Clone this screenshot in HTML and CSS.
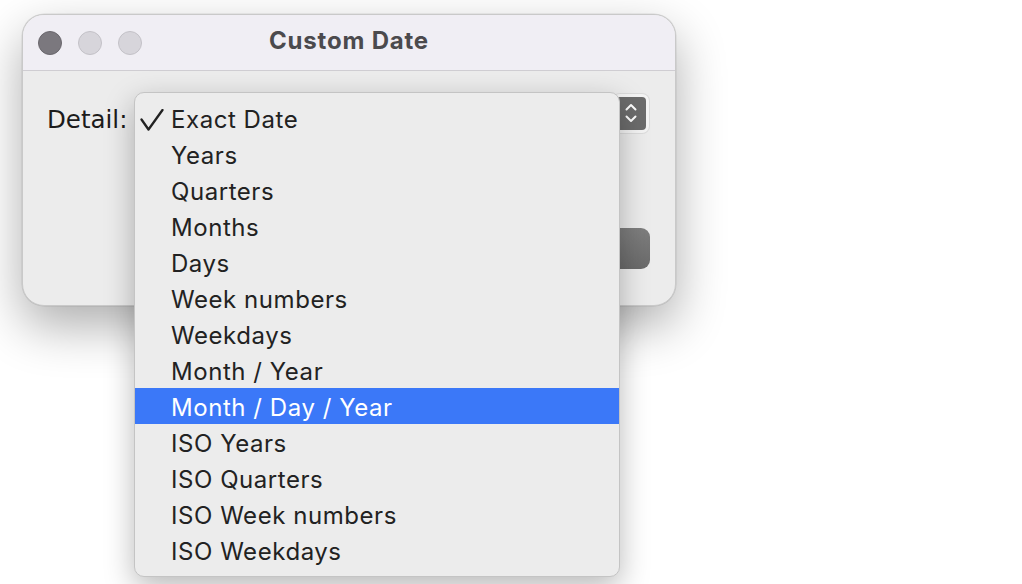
FILE: index.html
```html
<!DOCTYPE html>
<html>
<head>
<meta charset="utf-8">
<link rel="stylesheet" href="styles.css">
</head>
<body>
<div class="window">
  <div class="titlebar">
    <div class="lights">
      <span class="light close"></span>
      <span class="light"></span>
      <span class="light"></span>
    </div>
    <div class="title">Custom Date</div>
    <div class="spacer"></div>
  </div>
  <div class="content">
    <div class="row">
      <span class="label">Detail:</span>
      <span class="popup">
        <svg class="chev" viewBox="0 0 14 26" width="14" height="26"><path d="M2.5 9.5 L7 5 L11.5 9.5 M2.5 16.5 L7 21 L11.5 16.5" fill="none" stroke="#fff" stroke-width="2" stroke-linecap="round" stroke-linejoin="round"/></svg>
      </span>
    </div>
    <div class="btnrow">
      <span class="button"></span>
    </div>
  </div>
</div>
<div class="menu">
  <div class="item"><svg class="check" viewBox="0 0 24 22" width="24" height="22"><path d="M1.5 10.5 L8.5 20.5 L22.5 1" fill="none" stroke="#222" stroke-width="2.3" stroke-linecap="round" stroke-linejoin="round"/></svg>Exact Date</div>
  <div class="item">Years</div>
  <div class="item">Quarters</div>
  <div class="item">Months</div>
  <div class="item">Days</div>
  <div class="item">Week numbers</div>
  <div class="item">Weekdays</div>
  <div class="item">Month / Year</div>
  <div class="item selected">Month / Day / Year</div>
  <div class="item">ISO Years</div>
  <div class="item">ISO Quarters</div>
  <div class="item">ISO Week numbers</div>
  <div class="item">ISO Weekdays</div>
</div>
</body>
</html>
```
FILE: styles.css
```css
html, body {
  margin: 0;
  padding: 0;
  background: #ffffff;
  width: 1022px;
  height: 584px;
  overflow: hidden;
  position: relative;
}
.window {
  margin: 14px 0 0 22px;
  width: 652px;
  height: 290px;
  background: #ececec;
  border: 1px solid #c9c9c9;
  border-radius: 22px;
  box-shadow: 0 20px 50px rgba(0,0,0,0.32), 0 0 0 0.5px rgba(0,0,0,0.1);
  overflow: hidden;
  box-sizing: content-box;
}
.titlebar {
  height: 55px;
  background: #f0eef4;
  border-bottom: 1px solid #cfcdd2;
  display: grid;
  grid-template-columns: 1fr auto 1fr;
  align-items: center;
}
.lights {
  display: flex;
  gap: 16px;
  padding-left: 15px;
}
.light {
  width: 22px;
  height: 22px;
  border-radius: 50%;
  background: #d7d5db;
  border: 1px solid #c3c1c7;
}
.light.close {
  background: #7b787e;
  border-color: #6a676d;
}
.title {
  font-family: "Inter", "Liberation Sans", sans-serif;
  font-weight: 700;
  font-size: 24px;
  letter-spacing: 0.8px;
  color: #4b4a4d;
  padding-bottom: 4px;
}
.content {
  padding: 22px 25px 0 24px;
}
.row {
  display: flex;
  align-items: center;
  justify-content: space-between;
  height: 40px;
}
.label {
  font-family: "DejaVu Sans", sans-serif;
  font-size: 24.5px;
  color: #1b1b1b;
  padding-top: 13px;
}
.popup {
  width: 30px;
  height: 33px;
  background: #6c6c6c;
  border-radius: 7px;
  border: 3px solid #f4f4f4;
  box-shadow: 0 0 0 1px #dcdcdc;
  display: flex;
  align-items: center;
  justify-content: center;
  margin-right: 1px;
}
.btnrow {
  display: flex;
  justify-content: flex-end;
  margin-top: 95px;
}
.button {
  width: 120px;
  height: 41px;
  background: linear-gradient(#7e7e7e, #6a6a6a);
  border-radius: 9px;
}
.menu {
  position: absolute;
  left: 134px;
  top: 92px;
  width: 484px;
  height: 468px;
  padding: 7px 0 8px 0;
  background: #ececec;
  border: 1px solid #c4c4c4;
  border-radius: 10px;
  box-shadow: 0 10px 30px rgba(0,0,0,0.28);
}
.item {
  height: 36px;
  line-height: 40px;
  padding-left: 36px;
  font-family: "Inter", "Liberation Sans", sans-serif;
  font-size: 24px;
  letter-spacing: 0.55px;
  color: #222222;
  position: relative;
}
.item.selected {
  background: #3b78f8;
  color: #ffffff;
}
.check {
  position: absolute;
  left: 5px;
  top: 9px;
}
```
